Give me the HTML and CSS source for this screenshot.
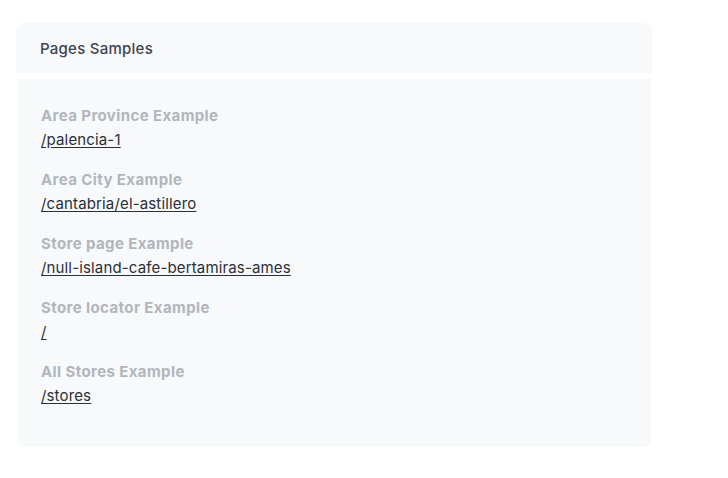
FILE: index.html
```html
<!DOCTYPE html>
<html>
<head>
<meta charset="utf-8">
<link rel="stylesheet" href="styles.css">
</head>
<body>
<div class="panel">
  <div class="panel-header">Pages Samples</div>
  <div class="panel-body">
    <div class="sample">
      <div class="sample-label">Area Province Example</div>
      <a class="sample-link" href="#">/palencia-1</a>
    </div>
    <div class="sample">
      <div class="sample-label">Area City Example</div>
      <a class="sample-link" href="#">/cantabria/el-astillero</a>
    </div>
    <div class="sample">
      <div class="sample-label">Store page Example</div>
      <a class="sample-link" href="#">/null-island-cafe-bertamiras-ames</a>
    </div>
    <div class="sample">
      <div class="sample-label">Store locator Example</div>
      <a class="sample-link" href="#">/</a>
    </div>
    <div class="sample">
      <div class="sample-label">All Stores Example</div>
      <a class="sample-link" href="#">/stores</a>
    </div>
  </div>
</div>
</body>
</html>
```
FILE: styles.css
```css
html, body {
  margin: 0;
  padding: 0;
  background: #ffffff;
}
body {
  font-family: Inter, "Liberation Sans", sans-serif;
  font-size: 15px;
  line-height: 24px;
  padding: 23px 0 0 16px;
}
.panel {
  width: 636px;
  display: flex;
  flex-direction: column;
  gap: 6px;
}
.panel-header {
  height: 50px;
  box-sizing: border-box;
  padding: 14px 24px 0 24px;
  background: #f8f9fa;
  border-radius: 8px 8px 0 0;
  color: #3d4350;
  font-weight: 500;
  letter-spacing: 0.25px;
}
.panel-body {
  margin: 0 1px;
  background: #f8f9fa;
  border-radius: 0 0 8px 8px;
  padding: 25px 24px 39px 24px;
  display: flex;
  flex-direction: column;
  gap: 16px;
}
.sample {
  display: flex;
  flex-direction: column;
  align-items: flex-start;
}
.sample-label {
  color: #b1b6bd;
  font-weight: 700;
  letter-spacing: 0.4px;
}
.sample-link {
  color: #2b2f36;
  text-decoration: underline;
  text-underline-offset: 2px;
  letter-spacing: 0.15px;
}
```
